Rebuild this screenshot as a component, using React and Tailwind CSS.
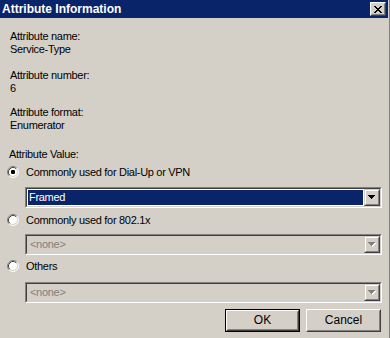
import React from "react";

const font = { fontFamily: '"Liberation Sans", Arial, sans-serif' };

// classic 12px radio, drawn the way the old theme does it
function Radio({ checked }) {
  return (
    <svg width="12" height="12" viewBox="0 0 12 12" className="shrink-0">
      <circle cx="6" cy="6" r="5" fill="#ffffff" />
      <path d="M2.11 9.89 A5.5 5.5 0 0 1 9.89 2.11" fill="none" stroke="#808080" strokeWidth="1" />
      <path d="M9.89 2.11 A5.5 5.5 0 0 1 2.11 9.89" fill="none" stroke="#ffffff" strokeWidth="1" />
      <path d="M2.82 9.18 A4.5 4.5 0 0 1 9.18 2.82" fill="none" stroke="#404040" strokeWidth="1" />
      <path d="M9.18 2.82 A4.5 4.5 0 0 1 2.82 9.18" fill="none" stroke="#d4d0c8" strokeWidth="1" />
      {checked && <rect x="4" y="4" width="4" height="4" rx="1.2" fill="#000000" />}
    </svg>
  );
}

function Arrow({ disabled }) {
  const rows = [
    [0, 7],
    [1, 5],
    [2, 3],
    [3, 1],
  ];
  return (
    <svg width="8" height="5" viewBox="0 0 8 5">
      {disabled &&
        rows.map(([x, w], i) => (
          <rect key={"s" + i} x={x + 1} y={i + 1} width={w} height="1" fill="#ffffff" />
        ))}
      {rows.map(([x, w], i) => (
        <rect key={i} x={x} y={i} width={w} height="1" fill={disabled ? "#808080" : "#000000"} />
      ))}
    </svg>
  );
}

function DropButton({ disabled }) {
  return (
    <div className="w-[16px] h-full border border-t-[#d4d0c8] border-l-[#d4d0c8] border-r-[#404040] border-b-[#404040]">
      <div className="w-full h-full border border-t-white border-l-white border-r-[#808080] border-b-[#808080] bg-[#d4d0c8] flex items-center justify-center">
        <Arrow disabled={disabled} />
      </div>
    </div>
  );
}

function Combo({ value, disabled, className }) {
  return (
    <div
      className={`h-[21px] border border-t-[#808080] border-l-[#808080] border-r-white border-b-white ${className}`}
    >
      <div className="h-full border border-t-[#404040] border-l-[#404040] border-r-[#d4d0c8] border-b-[#d4d0c8] flex">
        {disabled ? (
          <div className="flex-1 bg-[#d4d0c8] pl-[3px] text-[11px] leading-[17px] text-[#808080]">{value}</div>
        ) : (
          <div className="flex-1 bg-white p-px">
            <div className="h-full bg-[#0a246a] pl-px text-[11px] leading-[15px] text-white">{value}</div>
          </div>
        )}
        <DropButton disabled={disabled} />
      </div>
    </div>
  );
}

function PushButton({ label, isDefault }) {
  const inner = (
    <div className="h-full border border-t-white border-l-white border-r-[#404040] border-b-[#404040]">
      <div className="h-full border border-t-[#d4d0c8] border-l-[#d4d0c8] border-r-[#808080] border-b-[#808080] flex items-center justify-center text-[12px] tracking-normal text-black">
        {label}
      </div>
    </div>
  );
  return (
    <div className={`w-[75px] h-[23px] bg-[#d4d0c8] ${isDefault ? "border border-black" : ""}`}>{inner}</div>
  );
}

function CloseGlyph() {
  const rows = [
    [[0, 2], [6, 2]],
    [[1, 2], [5, 2]],
    [[2, 4]],
    [[3, 2]],
    [[2, 4]],
    [[1, 2], [5, 2]],
    [[0, 2], [6, 2]],
  ];
  return (
    <svg width="8" height="7" viewBox="0 0 8 7">
      {rows.map((segs, y) =>
        segs.map(([x, w], j) => <rect key={y + "-" + j} x={x} y={y} width={w} height="1" fill="#000000" />)
      )}
    </svg>
  );
}

export default function App() {
  return (
    <div className="w-[390px] h-[338px] flex bg-[#d4d0c8] overflow-hidden" style={font}>
      <div className="w-[388px] flex flex-col">
        {/* Title bar */}
        <div className="h-[18px] bg-[#0a246a] flex items-center justify-between pl-[2px] pr-[2px]">
          <span className="text-[12px] font-bold text-white leading-[18px]">Attribute Information</span>
          <div className="w-[16px] h-[14px] border border-t-white border-l-white border-r-[#404040] border-b-[#404040]">
            <div className="h-full border border-t-[#d4d0c8] border-l-[#d4d0c8] border-r-[#808080] border-b-[#808080] bg-[#d4d0c8] flex items-center justify-center">
              <CloseGlyph />
            </div>
          </div>
        </div>

        {/* Body */}
        <div className="flex flex-col pl-[7px] pr-[6px] pt-[12px] text-[11px] leading-[13px] tracking-[-0.3px] text-black">
          <div className="pl-[3px]">
            <div>Attribute name:</div>
            <div>Service-Type</div>
          </div>
          <div className="pl-[3px] mt-[13px]">
            <div>Attribute number:</div>
            <div>6</div>
          </div>
          <div className="pl-[3px] mt-[11px]">
            <div>Attribute format:</div>
            <div>Enumerator</div>
          </div>
          <div className="pl-[2px] mt-[16px]">Attribute Value:</div>

          <div className="mt-[4px] h-[14px] flex items-center gap-[7px]">
            <Radio checked />
            <span>Commonly used for Dial-Up or VPN</span>
          </div>
          <Combo value="Framed" className="mt-[8px] ml-[18px]" />

          <div className="mt-[5px] h-[14px] flex items-center gap-[7px]">
            <Radio />
            <span>Commonly used for 802.1x</span>
          </div>
          <Combo value="<none>" disabled className="mt-[7px] ml-[18px]" />

          <div className="mt-[4px] h-[14px] flex items-center gap-[7px]">
            <Radio />
            <span>Others</span>
          </div>
          <Combo value="<none>" disabled className="mt-[9px] ml-[18px]" />

          <div className="mt-[6px] flex justify-end gap-[6px] pr-px">
            <PushButton label="OK" isDefault />
            <PushButton label="Cancel" />
          </div>
        </div>
      </div>
      <div className="w-[2px] flex">
        <div className="w-px bg-[#d4d0c8]" />
        <div className="w-px bg-[#808080]" />
      </div>
    </div>
  );
}
